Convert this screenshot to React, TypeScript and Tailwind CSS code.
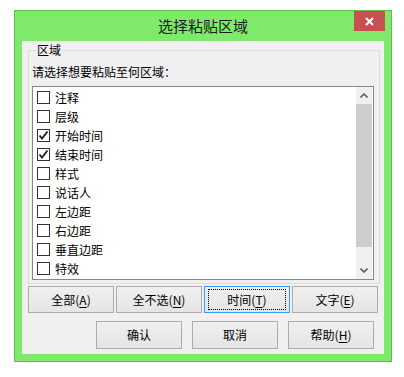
const items = [
  { label: '注释', checked: false },
  { label: '层级', checked: false },
  { label: '开始时间', checked: true },
  { label: '结束时间', checked: true },
  { label: '样式', checked: false },
  { label: '说话人', checked: false },
  { label: '左边距', checked: false },
  { label: '右边距', checked: false },
  { label: '垂直边距', checked: false },
  { label: '特效', checked: false },
];

const font = { fontFamily: '"Noto Sans CJK SC", "Noto Sans", sans-serif' };

function CheckBox({ checked }: { checked: boolean }) {
  return (
    <div className="w-[13px] h-[13px] border border-[#333333] bg-white flex items-center justify-center shrink-0">
      {checked && (
        <svg width="11" height="11" viewBox="0 0 11 11">
          <path d="M1.5 5.5 L4 8.5 L9.5 1.5" fill="none" stroke="#1c1c1c" strokeWidth="1.8" />
        </svg>
      )}
    </div>
  );
}

function Btn({
  text,
  hotkey,
  focused,
}: {
  text: string;
  hotkey?: string;
  focused?: boolean;
}) {
  return (
    <button
      className={
        'w-[86px] h-full flex items-center justify-center text-[12px] text-black bg-gradient-to-b from-[#f0f0f0] to-[#e5e5e5] border ' +
        (focused ? 'border-[#3399ff]' : 'border-[#acacac]')
      }
    >
      <span
        className={
          'flex items-center justify-center leading-[16px] ' +
          (focused ? 'w-[78px] h-[21px] border border-dotted border-black' : '')
        }
      >
        {text}
        {hotkey && (
          <>
            (<u className="underline-offset-2">{hotkey}</u>)
          </>
        )}
      </span>
    </button>
  );
}

export default function App() {
  return (
    <div className="w-[404px] h-[377px] bg-white pt-[10px] pl-[14px]" style={font}>
      <div className="w-[378px] h-[352px] bg-[#7fe96c] border border-[#5cbf4a] flex flex-col">
        {/* title bar */}
        <div className="h-[30px] flex relative">
          <div className="flex-1 flex items-center justify-center text-[15px] text-[#1a1a1a] pt-[1px]">
            选择粘贴区域
          </div>
          <div className="absolute top-0 right-[6px] w-[31px] h-[20px] bg-[#c75050] flex items-center justify-center">
            <svg width="9" height="9" viewBox="0 0 9 9">
              <path d="M1 1 L8 8 M8 1 L1 8" stroke="white" strokeWidth="2" />
            </svg>
          </div>
        </div>

        {/* client */}
        <div className="mx-[7px] h-[313px] bg-[#f0f0f0] pl-[6px] pt-[1px]">
          <fieldset className="w-[352px] border border-[#dcdcdc] px-[3px] pb-[3px]">
            <legend className="ml-[4px] px-[1px] text-[12px] leading-[16px] text-black">区域</legend>
            <div className="mt-[6px] text-[12px] leading-[16px] text-black">请选择想要粘贴至何区域：</div>
            <div className="mt-[6px] w-[342px] h-[194px] border border-[#828790] bg-white flex">
              <div className="flex-1 pt-[1px] pl-[4px]">
                {items.map((it) => (
                  <div key={it.label} className="h-[19px] flex items-center gap-[5px]">
                    <CheckBox checked={it.checked} />
                    <span className="text-[12px] leading-[16px] text-black">{it.label}</span>
                  </div>
                ))}
              </div>
              <div className="w-[16px] mr-[1px] bg-[#f0f0f0] flex flex-col">
                <div className="h-[17px] flex items-center justify-center">
                  <svg width="8" height="5" viewBox="0 0 8 5">
                    <path d="M0.5 4.5 L4 1 L7.5 4.5" fill="none" stroke="#606060" strokeWidth="1.6" />
                  </svg>
                </div>
                <div className="h-[143px] bg-[#cdcdcd]" />
                <div className="flex-1 flex items-end justify-center pb-[6px]">
                  <svg width="8" height="5" viewBox="0 0 8 5">
                    <path d="M0.5 0.5 L4 4 L7.5 0.5" fill="none" stroke="#606060" strokeWidth="1.6" />
                  </svg>
                </div>
              </div>
            </div>
          </fieldset>

          <div className="mt-[2px] h-[27px] flex gap-[2px]">
            <Btn text="全部" hotkey="A" />
            <Btn text="全不选" hotkey="N" />
            <Btn text="时间" hotkey="T" focused />
            <Btn text="文字" hotkey="E" />
          </div>
          <div className="mt-[8px] h-[28px] w-[346px] flex justify-end gap-[10px]">
            <Btn text="确认" />
            <Btn text="取消" />
            <Btn text="帮助" hotkey="H" />
          </div>
        </div>
      </div>
    </div>
  );
}
